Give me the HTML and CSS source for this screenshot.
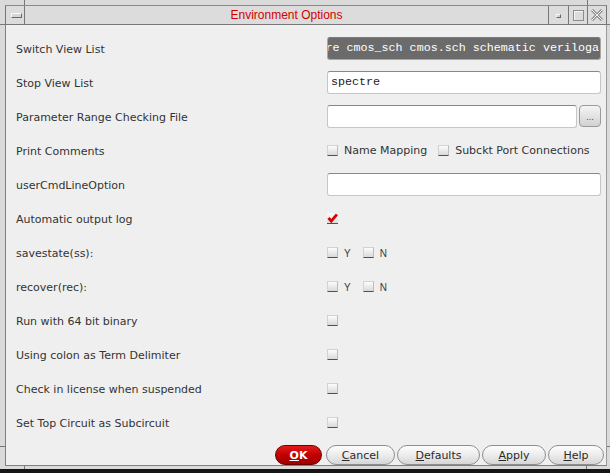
FILE: index.html
```html
<!DOCTYPE html>
<html>
<head>
<meta charset="utf-8">
<title>Environment Options</title>
<link rel="stylesheet" href="styles.css">
</head>
<body>
<div class="frame">
  <span class="mark mark-tl-v"></span>
  <span class="mark mark-tr-v"></span>
  <span class="mark mark-tl-h"></span>
  <span class="mark mark-tr-h"></span>
  <span class="mark mark-bl-h"></span>
  <span class="mark mark-br-h"></span>
  <span class="mark mark-bl-v"></span>
  <span class="mark mark-br-v"></span>
  <div class="titlebar">
    <div class="tb-menu"><span class="menu-glyph"></span></div>
    <div class="tb-title">Environment Options</div>
    <div class="tb-btn tb-min"><span class="min-glyph"></span></div>
    <div class="tb-btn"><span class="max-glyph"></span></div>
    <div class="tb-btn">
      <svg class="close-glyph" width="12" height="12" viewBox="0 0 12 12">
        <path d="M1 1 L11 11 M11 1 L1 11" stroke="#8c8c8c" stroke-width="3" fill="none"/>
        <path d="M1 1 L11 11 M11 1 L1 11" stroke="#f4f4f4" stroke-width="1" fill="none"/>
      </svg>
    </div>
  </div>
  <div class="content">
    <div class="form">
      <div class="label">Switch View List</div>
      <div class="field selected"><span>spectre cmos_sch cmos.sch schematic veriloga</span></div>

      <div class="label">Stop View List</div>
      <div class="field">spectre</div>

      <div class="label">Parameter Range Checking File</div>
      <div class="file-row">
        <div class="field short"></div>
        <div class="browse">...</div>
      </div>

      <div class="label">Print Comments</div>
      <div class="checks">
        <span class="cb"></span><span class="opt">Name Mapping</span>
        <span class="cb second"></span><span class="opt">Subckt Port Connections</span>
      </div>

      <div class="label">userCmdLineOption</div>
      <div class="field"></div>

      <div class="label">Automatic output log</div>
      <div class="checks">
        <svg class="cb-checked" width="11" height="11" viewBox="0 0 11 11">
          <defs>
            <linearGradient id="cbg" x1="0" y1="0" x2="0" y2="1">
              <stop offset="0" stop-color="#fcfcfc"/>
              <stop offset="1" stop-color="#d9d9d9"/>
            </linearGradient>
          </defs>
          <rect x="0" y="0" width="11" height="11" fill="url(#cbg)"/>
          <rect x="0" y="10" width="11" height="1" fill="#505050"/>
          <path d="M1.5 5 L4.3 8.2 L10 1.3" stroke="#d80000" stroke-width="2.8" fill="none"/>
        </svg>
      </div>

      <div class="label">savestate(ss):</div>
      <div class="checks">
        <span class="cb"></span><span class="yn">Y</span>
        <span class="cb yn-second"></span><span class="yn">N</span>
      </div>

      <div class="label">recover(rec):</div>
      <div class="checks">
        <span class="cb"></span><span class="yn">Y</span>
        <span class="cb yn-second"></span><span class="yn">N</span>
      </div>

      <div class="label">Run with 64 bit binary</div>
      <div class="checks"><span class="cb"></span></div>

      <div class="label">Using colon as Term Delimiter</div>
      <div class="checks"><span class="cb"></span></div>

      <div class="label">Check in license when suspended</div>
      <div class="checks"><span class="cb"></span></div>

      <div class="label">Set Top Circuit as Subcircuit</div>
      <div class="checks"><span class="cb"></span></div>
    </div>
    <div class="buttons">
      <div class="btn btn-ok"><u>O</u>K</div>
      <div class="btn btn-cancel"><u>C</u>ancel</div>
      <div class="btn btn-defaults"><u>D</u>efaults</div>
      <div class="btn btn-apply"><u>A</u>pply</div>
      <div class="btn btn-help"><u>H</u>elp</div>
    </div>
  </div>
</div>
</body>
</html>
```
FILE: styles.css
```css
html, body {
  margin: 0;
  height: 100%;
}
body {
  background: #dadada;
  font-family: "DejaVu Sans", sans-serif;
  font-size: 11px;
  color: #333;
}
.frame {
  position: relative;
  box-sizing: border-box;
  height: 473px;
  padding: 5px 3px 3px 5px;
  border-bottom: 4px solid #151515;
  display: flex;
  flex-direction: column;
  background: #dadada;
}
.mark {
  position: absolute;
  background: #777;
}
.mark-tl-v { left: 24px; top: 0; width: 1px; height: 5px; }
.mark-tr-v { left: 587px; top: 0; width: 1px; height: 5px; }
.mark-tl-h { left: 0; top: 24px; width: 5px; height: 1px; }
.mark-tr-h { right: 0; top: 24px; width: 3px; height: 1px; }
.mark-bl-h { left: 0; top: 446px; width: 5px; height: 1px; }
.mark-br-h { right: 0; top: 446px; width: 3px; height: 1px; }
.mark-bl-v { left: 24px; top: 466px; width: 1px; height: 3px; }
.mark-br-v { left: 586px; top: 466px; width: 1px; height: 3px; }

.titlebar {
  display: flex;
  height: 20px;
  box-sizing: border-box;
  border: 1px solid #777;
  border-top-color: #8a8a8a;
  background: #dcdcdc;
}
.tb-menu {
  width: 18px;
  border-right: 1px solid #777;
  display: flex;
  align-items: center;
  justify-content: center;
}
.menu-glyph {
  width: 11px;
  height: 5px;
  box-sizing: border-box;
  margin: 1px 0 0 2px;
  border: 1px solid #f8f8f8;
  border-right-color: #6a6a6a;
  border-bottom-color: #6a6a6a;
  background: #d6d6d6;
}
.tb-title {
  flex: 1;
  text-align: center;
  color: #d40000;
  font-family: "Liberation Sans", sans-serif;
  font-size: 12px;
  line-height: 18px;
}
.tb-btn {
  width: 18px;
  border-left: 1px solid #777;
  display: flex;
  align-items: center;
  justify-content: center;
}
.tb-min { width: 19px; }
.min-glyph {
  width: 5px;
  height: 4px;
  box-sizing: border-box;
  border: 1px solid #f8f8f8;
  border-right-color: #666;
  border-bottom-color: #666;
  background: #d0d0d0;
  margin-top: 1px;
}
.max-glyph {
  width: 11px;
  height: 11px;
  box-sizing: border-box;
  border: 1px solid #8c8c8c;
  box-shadow: inset 1px 1px 0 #f6f6f6;
}
.close-glyph { display: block; }

.content {
  flex: 1;
  display: flex;
  flex-direction: column;
  background: #efefef;
  border: 1px solid #808080;
  border-top: none;
  border-right-color: #9a9a9a;
}
.form {
  display: grid;
  grid-template-columns: 311px 274px;
  grid-auto-rows: 34px;
  align-items: center;
  padding: 6px 0 0 10px;
}
.label {
  padding-top: 3px;
  white-space: nowrap;
}
.field {
  height: 23px;
  box-sizing: border-box;
  border: 1px solid #c6c6c6;
  border-top-color: #878787;
  border-radius: 3px;
  background: #fff;
  font-family: "Liberation Mono", monospace;
  font-size: 11.7px;
  color: #222;
  display: flex;
  align-items: center;
  padding: 0 3px;
  white-space: nowrap;
  overflow: hidden;
}
.field.selected {
  background: #6b6b6b;
  color: #fff;
  justify-content: flex-end;
  padding: 0 1px 0 0;
  border-color: #a8a8a8;
  border-top-color: #7c7c7c;
}
.file-row {
  display: flex;
  align-items: center;
  gap: 2px;
}
.field.short { width: 250px; }
.browse {
  width: 22px;
  height: 22px;
  box-sizing: border-box;
  border: 1px solid #9a9a9a;
  border-radius: 4px;
  background: linear-gradient(#f4f4f4, #d2d2d2);
  font-size: 8px;
  color: #444;
  display: flex;
  align-items: center;
  justify-content: center;
  padding-top: 3px;
}
.checks {
  display: flex;
  align-items: center;
  height: 12px;
}
.cb {
  width: 11px;
  height: 11px;
  box-sizing: border-box;
  border: 1px solid #d2d2d2;
  border-bottom-color: #505050;
  border-right-color: #bdbdbd;
  background: linear-gradient(#fcfcfc, #d9d9d9);
  flex-shrink: 0;
}
.cb-checked { display: block; flex-shrink: 0; }
.opt { margin-left: 6px; }
.cb.second { margin-left: 11px; }
.yn {
  margin-left: 6px;
  padding-top: 2px;
  font-family: "Liberation Sans", sans-serif;
  font-size: 10px;
  color: #3a3a3a;
}
.cb.yn-second { margin-left: 12px; }

.buttons {
  display: flex;
  justify-content: flex-end;
  margin-top: 6px;
  padding-right: 2px;
}
.btn {
  height: 20px;
  box-sizing: border-box;
  border: 1px solid #8e8e8e;
  border-radius: 10px;
  background: linear-gradient(#fdfdfd, #ececec 50%, #d6d6d6);
  color: #2a2a2a;
  display: flex;
  align-items: center;
  justify-content: center;
  padding-top: 1px;
}
.btn-ok {
  width: 47px;
  margin-right: 4px;
  background: linear-gradient(#e41c1c, #c00000 50%, #a00000);
  border-color: #6a0000;
  color: #fff;
  font-weight: bold;
}
.btn-cancel { width: 69px; margin-right: 2px; }
.btn-defaults { width: 83px; margin-right: 2px; }
.btn-apply { width: 64px; margin-right: 2px; }
.btn-help { width: 56px; }
```
